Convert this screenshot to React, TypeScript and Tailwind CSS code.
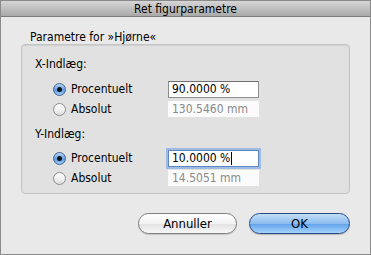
import React from 'react';

// Radio knap i aqua-stil
function Radio({ checked }: { checked: boolean }) {
  return checked ? (
    <div className="w-[13px] h-[13px] rounded-full border border-[#46628f] bg-[linear-gradient(#b9d6f3,#5d9be0_55%,#9ccbf6)] flex items-center justify-center shrink-0">
      <div className="w-[5px] h-[5px] rounded-full bg-[#111]" />
    </div>
  ) : (
    <div className="w-[13px] h-[13px] rounded-full border border-[#8c8c8c] bg-[linear-gradient(#ffffff,#f0f0f0_55%,#dcdcdc)] shrink-0" />
  );
}

function Row({ checked, label, children }: { checked: boolean; label: string; children: React.ReactNode }) {
  return (
    <div className="flex items-center h-[20px]">
      <div className="w-[49px] flex justify-end pr-[5px]">
        <Radio checked={checked} />
      </div>
      <span className="w-[97px]">{label}</span>
      {children}
    </div>
  );
}

function Field({ value, focused }: { value: string; focused?: boolean }) {
  return (
    <div
      className={`w-[91px] h-[17px] bg-white flex items-center pl-[3px] text-black ${
        focused
          ? 'border border-[#5e86c0] shadow-[0_0_0_2px_#9dbbe3]'
          : 'border border-[#8e8e8e] border-t-[#6f6f6f]'
      }`}
    >
      {value}
      {focused && <span className="w-px h-[13px] bg-black ml-px" />}
    </div>
  );
}

function ReadOnly({ value }: { value: string }) {
  return (
    <div className="w-[91px] h-[16px] bg-[#fbfbfb] flex items-center pl-[4px] text-[#8a8a8a]">{value}</div>
  );
}

export default function App() {
  return (
    <div
      className="w-[371px] h-[255px] border border-[#8a8a8a] bg-[#e9e9e9] flex flex-col text-[12px] text-black"
      style={{ fontFamily: '"DejaVu Sans Condensed", "DejaVu Sans", sans-serif' }}
    >
      {/* Titellinje */}
      <div className="h-[16px] shrink-0 bg-[linear-gradient(#d6d6d6,#a9a9a9)] border-b border-[#7c7c7c] flex items-center justify-center">
        Ret figurparametre
      </div>

      <div className="px-[20px] pt-[13px]">
        <div className="pl-[9px] h-[14px] leading-[14px]">Parametre for »Hjørne«</div>

        {/* Gruppeboks */}
        <div className="h-[150px] rounded-[4px] border border-[#c4c4c4] bg-[#e1e1e1] shadow-[inset_0_1px_1px_rgba(0,0,0,0.08)] pt-[11px]">
          <div className="pl-[13px] h-[16px] leading-[16px]">X-Indlæg:</div>
          <div className="mt-[7px]">
            <Row checked label="Procentuelt">
              <Field value="90.0000 %" />
            </Row>
            <Row checked={false} label="Absolut">
              <ReadOnly value="130.5460 mm" />
            </Row>
          </div>
          <div className="pl-[13px] h-[16px] leading-[16px] mt-[7px]">Y-Indlæg:</div>
          <div className="mt-[6px]">
            <Row checked label="Procentuelt">
              <Field value="10.0000 %" focused />
            </Row>
            <Row checked={false} label="Absolut">
              <ReadOnly value="14.5051 mm" />
            </Row>
          </div>
        </div>

        {/* Knapper */}
        <div className="flex justify-end gap-[12px] mt-[19px]">
          <button className="w-[99px] h-[21px] rounded-full border border-[#7e7e7e] bg-[linear-gradient(#ffffff,#f3f3f3_50%,#e2e2e2_51%,#f7f7f7)] text-[13px] leading-none shadow-[0_1px_1px_rgba(0,0,0,0.15)]">
            Annuller
          </button>
          <button className="w-[101px] h-[21px] rounded-full border border-[#2a4a86] bg-[linear-gradient(#c3def6,#8cbdef_50%,#5fa2ea_51%,#a6d3fb)] text-[13px] leading-none shadow-[0_1px_1px_rgba(0,0,0,0.2)]">
            OK
          </button>
        </div>
      </div>
    </div>
  );
}
